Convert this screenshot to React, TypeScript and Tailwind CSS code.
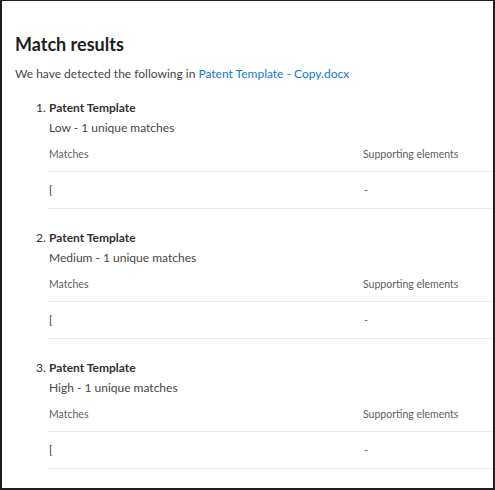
const items = [
  { n: 1, level: 'Low' },
  { n: 2, level: 'Medium' },
  { n: 3, level: 'High' },
];

function MatchItem({ n, level }: { n: number; level: string }) {
  return (
    <div className="mb-[19px]">
      <div className="flex h-5 items-center">
        <span className="w-[13px] text-[12px] text-[#323130]">{n}.</span>
        <span className="text-[12px] font-bold text-[#323130]">Patent Template</span>
      </div>
      <div className="ml-[13px] flex h-5 items-center text-[12px] text-[#484644]">
        {level} - 1 unique matches
      </div>
      <div className="ml-[12px] w-[460px]">
        <div className="flex h-[34px] items-center border-b border-[#edebe9] text-[10.5px] text-[#605e5c]">
          <span className="w-[315px] pl-px">Matches</span>
          <span>Supporting elements</span>
        </div>
        <div className="flex h-[37px] items-center border-b border-[#edebe9] text-[11px] text-[#323130]">
          <span className="w-[315px] pl-px">[</span>
          <span className="pl-px text-[#605e5c]">-</span>
        </div>
      </div>
    </div>
  );
}

export default function App() {
  return (
    <div
      className="h-[490px] w-[495px] overflow-hidden border-b-2 border-l-2 border-r-2 border-t border-[#1e1e1e] bg-white"
      style={{ fontFamily: 'Lato, "Open Sans", sans-serif' }}
    >
      <div className="pl-[13px] pt-[29px]">
        <h1 className="h-7 text-[18px] font-bold leading-7 text-[#201f1e]">Match results</h1>
        <p className="mt-[6px] flex h-5 items-center text-[12px] text-[#484644]">
          We have detected the following in&nbsp;
          <a className="text-[#0f78d4]">Patent Template - Copy.docx</a>
        </p>
        <div className="ml-[21px] mt-[14px]">
          {items.map((it) => (
            <MatchItem key={it.n} n={it.n} level={it.level} />
          ))}
        </div>
      </div>
    </div>
  );
}
